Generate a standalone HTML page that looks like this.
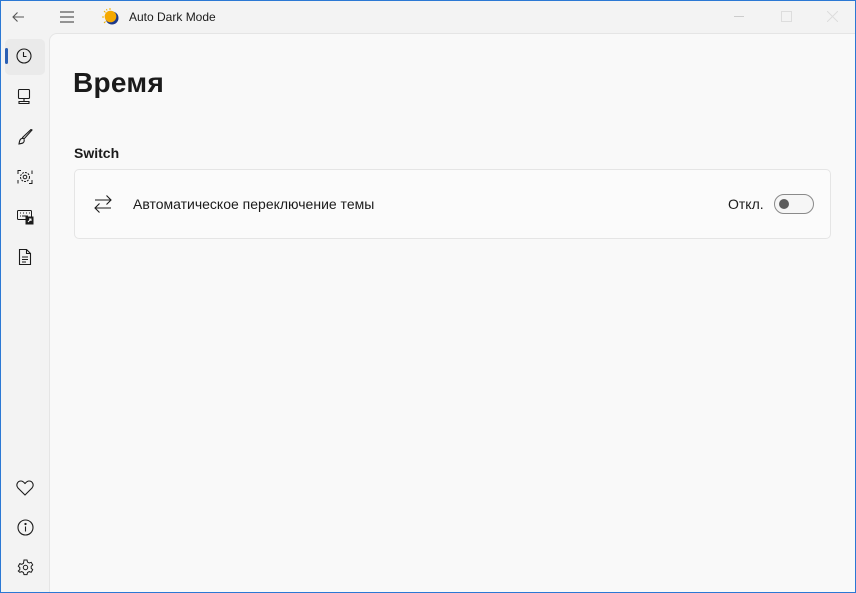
<!DOCTYPE html>
<html><head><meta charset="utf-8"><style>
*{margin:0;padding:0;box-sizing:border-box}
html,body{width:856px;height:593px;overflow:hidden;background:#2b78d4}
body{font-family:"Segoe UI","Liberation Sans",sans-serif;position:relative}
.win{position:absolute;left:1px;top:1px;width:854px;height:591px;background:#f3f3f3;overflow:hidden}
.title{position:absolute;left:128px;top:9px;font-size:12px;color:#1b1b1b}
.content{position:absolute;left:48px;top:32px;width:810px;height:570px;background:#f9f9f9;border:1px solid #e5e5e5;border-top-left-radius:8px}
h1{position:absolute;left:23px;top:33px;font-size:28px;font-weight:600;color:#1b1b1b;letter-spacing:0.3px}
.sec{position:absolute;left:24px;top:111px;font-size:14px;font-weight:600;color:#1b1b1b}
.card{position:absolute;left:24px;top:135px;width:757px;height:70px;background:#fbfbfb;border:1px solid #e5e5e5;border-radius:5px}
.card .lbl{position:absolute;left:58px;top:26px;font-size:14px;color:#1b1b1b}
.card .off{position:absolute;left:653px;top:26px;font-size:14px;color:#1b1b1b}
.tog{position:absolute;left:699px;top:24px;width:40px;height:20px;border:1px solid #8a8a8a;border-radius:10px;background:#f6f6f6}
.tog:after{content:"";position:absolute;left:4px;top:4px;width:10px;height:10px;border-radius:50%;background:#5d5d5d}
.sel{position:absolute;left:4px;top:38px;width:40px;height:36px;background:#eaeaea;border-radius:5px}
.bar{position:absolute;left:4px;top:47px;width:3px;height:16px;background:#2b5fb3;border-radius:2px}
svg{position:absolute}
</style></head><body><div class="win">
<svg style="left:9px;top:8px" width="16" height="16" viewBox="0 0 16 16" fill="none" stroke="#555" stroke-width="1.1"><path d="M14 8H3M7.5 3.5L3 8l4.5 4.5"/></svg>
<svg style="left:58px;top:9px" width="16" height="14" viewBox="0 0 16 14" stroke="#333" stroke-width="1.1"><path d="M1 2h14M1 7h14M1 12h14"/></svg>
<svg style="left:100px;top:7px" width="20" height="18" viewBox="0 0 20 18"><g stroke="#f0b000" stroke-width="1"><path d="M1 9h2M3 3l1.5 1.5M9 0v2M3 15l1.5-1.5M5.5 1l.5 1.5"/></g><circle cx="11" cy="10" r="6.5" fill="#1e3a8a"/><circle cx="9.5" cy="8.5" r="5.8" fill="#f5a900"/></svg>
<div class="title">Auto Dark Mode</div>
<svg style="left:733px;top:15px" width="10" height="1"><rect width="10" height="1" fill="#ccc"/></svg>
<svg style="left:780px;top:10px" width="11" height="11"><rect x=".5" y=".5" width="10" height="10" fill="none" stroke="#ddd"/></svg>
<svg style="left:826px;top:10px" width="11" height="11" stroke="#ddd"><path d="M0 0l11 11M11 0L0 11"/></svg>
<div class="sel"></div><div class="bar"></div>
<svg style="left:15px;top:47px" width="16" height="16" viewBox="0 0 16 16" fill="none" stroke="#1b1b1b" stroke-width="1.1"><circle cx="8" cy="8" r="7"/><path d="M7.5 4v4.5h3"/></svg>
<svg style="left:16px;top:88px" width="14" height="16" viewBox="0 0 14 16" fill="none" stroke="#1b1b1b" stroke-width="1.1"><rect x="1.5" y=".5" width="11" height="9" rx="1"/><path d="M7 10v2M2 12.5h10v2H2z"/></svg>
<svg style="left:16px;top:128px" width="16" height="16" viewBox="0 0 16 16" fill="none" stroke="#1b1b1b" stroke-width="1.1"><path d="M15 1L7 10l-1.5-1.5L14 .5zM6 9.5C3 9 2.5 12 2 15c3-.5 6-1 5-4.5"/></svg>
<svg style="left:16px;top:168px" width="16" height="16" viewBox="0 0 16 16" fill="none" stroke="#1b1b1b" stroke-width="1"><path d="M1 5V1.5h3M15 11v3.5h-3M1 11v3.5M15 5V1.5"/><circle cx="8" cy="8" r="4.5" stroke-dasharray="2 1"/><circle cx="8" cy="8" r="1.8"/></svg>
<svg style="left:16px;top:208px" width="17" height="16" viewBox="0 0 17 16" fill="none" stroke="#1b1b1b" stroke-width="1"><rect x=".5" y="1.5" width="14" height="9" rx="1"/><path d="M3 4h1M6 4h1M9 4h1M12 4h1M3 7h1M5 7h6"/><rect x="9" y="8" width="7" height="7" fill="#1b1b1b"/><path d="M11 13l3-3M12 10h2v2" stroke="#fff"/></svg>
<svg style="left:17px;top:248px" width="14" height="16" viewBox="0 0 14 16" fill="none" stroke="#1b1b1b" stroke-width="1.1"><path d="M1.5.5h7l4 4v11h-11zM8.5.5v4h4M4 8h6M4 10.5h6M4 13h4"/></svg>
<svg style="left:15px;top:479px" width="18" height="16" viewBox="0 0 18 16" fill="none" stroke="#1b1b1b" stroke-width="1.1"><path d="M9 15L2 8C-.5 5 1.5 1 5 1c2 0 3 1.5 4 2.5C10 2.5 11 1 13 1c3.5 0 5.5 4 3 7z"/></svg>
<svg style="left:16px;top:518px" width="17" height="17" viewBox="0 0 17 17" fill="none" stroke="#1b1b1b" stroke-width="1.1"><circle cx="8.5" cy="8.5" r="7.5"/><path d="M8.5 7.5v5"/><circle cx="8.5" cy="5" r=".6" fill="#1b1b1b"/></svg>
<svg style="left:16px;top:558px" width="17" height="17" viewBox="0 0 17 17" fill="none" stroke="#1b1b1b" stroke-width="1"><path d="M7 1h3l.5 2 1.7 1 2-.7 1.5 2.6-1.5 1.4v2l1.5 1.4-1.5 2.6-2-.7-1.7 1-.5 2H7l-.5-2-1.7-1-2 .7L1.3 12l1.5-1.4v-2L1.3 7.2 2.8 4.6l2 .7 1.7-1z"/><circle cx="8.5" cy="8.5" r="2.2"/></svg>
<div class="content">
<h1>Время</h1>
<div class="sec">Switch</div>
<div class="card">
<svg style="left:19px;top:24px" width="18" height="20" viewBox="0 0 18 20" fill="none" stroke="#1b1b1b" stroke-width="1.1"><path d="M1 6h16M12.5 1.5L17 6l-4.5 4.5M17 14H1M5.5 9.5L1 14l4.5 4.5"/></svg>
<div class="lbl">Автоматическое переключение темы</div>
<div class="off">Откл.</div>
<div class="tog"></div>
</div>
</div>
</div></body></html>
